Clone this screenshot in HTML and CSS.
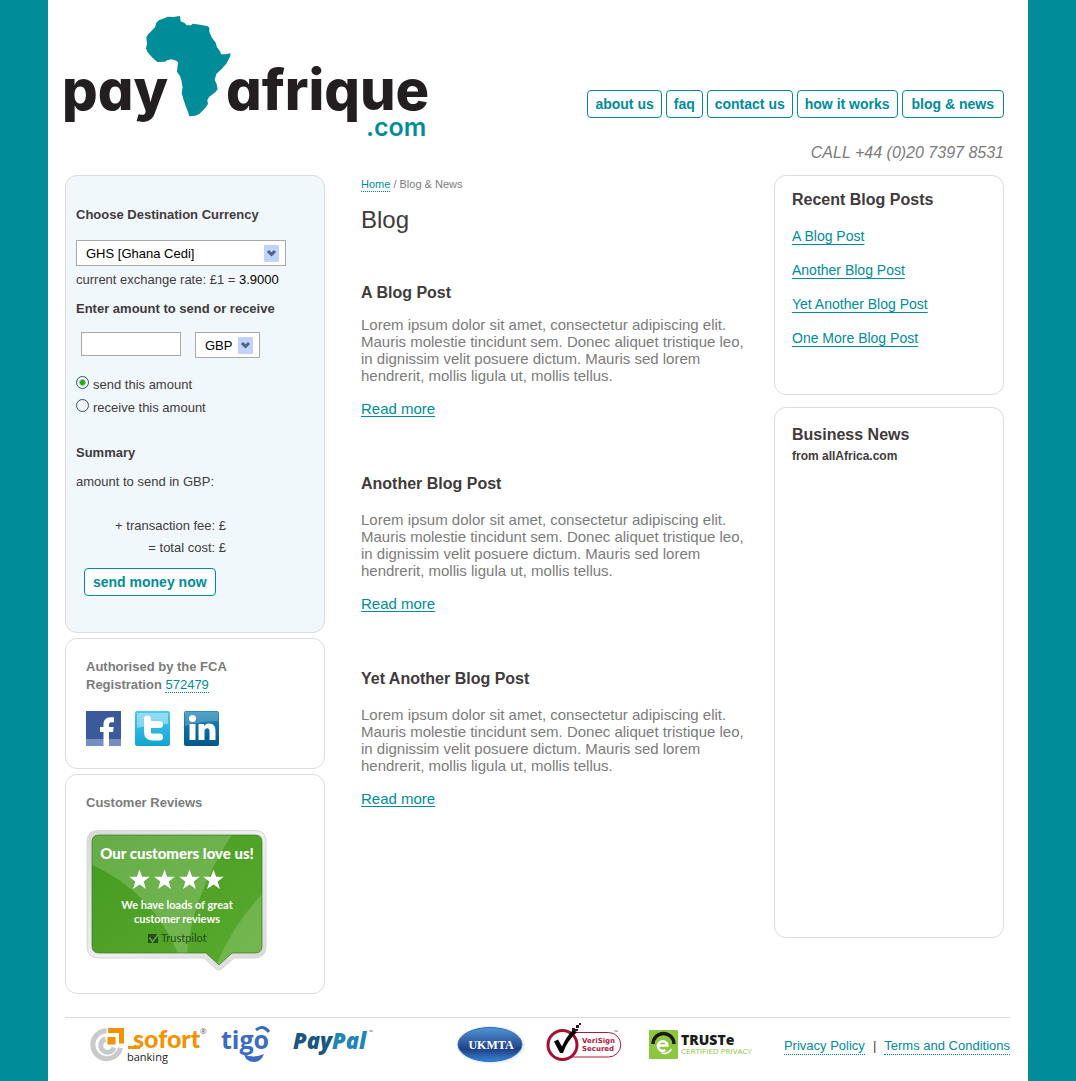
FILE: index.html
```html
<!DOCTYPE html>
<html lang="en">
<head>
<meta charset="utf-8">
<meta name="viewport" content="width=device-width, initial-scale=1">
<title>Blog &amp; News | Pay Afrique</title>
<link rel="stylesheet" href="styles.css">
</head>
<body>
<div class="page">
  <header class="header">
    <a class="logo" href="#" aria-label="payafrique.com">
      <svg width="366" height="126" viewBox="0 0 366 126">
        <g transform="translate(-25 -15) scale(.3333)">
          <path fill="#008c99" d="M383 50L400 51L420 48L422 64L434 69L440 76L453 76L458 71L480 74L504 79L508 84L508 95L515 112L527 128L531 141L541 155L543 163L556 163L572 160L570 170L560 190L545 207L529 222L524 240L530 252L533 268L526 277L508 290L502 300L504 312L495 325L478 342L466 347L448 349L444 335L437 318L431 300L425 280L428 262L424 240L420 228L411 215L413 195L415 188L409 182L395 178L383 180L374 185L352 186L336 172L322 155L318 145L321 132L319 112L325 102L335 92L345 82L349 68L358 60L373 55Z"/>
        </g>
        <text class="logo-name" x="-3" y="95">pay</text>
        <text class="logo-name" x="161" y="95">afrique</text>
        <text class="logo-tld" x="301" y="121">.com</text>
      </svg>
    </a>
    <div class="header-side">
      <nav class="nav">
        <a class="pill" href="#">about us</a>
        <a class="pill" href="#">faq</a>
        <a class="pill" href="#">contact us</a>
        <a class="pill" href="#">how it works</a>
        <a class="pill current" href="#">blog &amp; news</a>
      </nav>
      <p class="call">CALL +44 (0)20 7397 8531</p>
    </div>
  </header>

  <div class="columns">
    <div class="stack">
      <form class="panel calculator">
        <label class="field-title" for="currency">Choose Destination Currency</label>
        <div class="select select-wide">
          <select id="currency"><option>GHS [Ghana Cedi]</option></select>
          <svg class="arrow" width="15" height="17" viewBox="0 0 15 17"><rect width="15" height="17" rx="1" fill="#c1d3fb"/><path d="M4 6l3.500 3.500L11 6" fill="none" stroke="#4d6185" stroke-width="3"/></svg>
        </div>
        <p class="rate">current exchange rate: £1 = <span class="value">3.9000</span></p>
        <label class="field-title" for="amount">Enter amount to send or receive</label>
        <div class="amount-row">
          <input class="amount" id="amount" type="text">
          <div class="select select-small">
            <select aria-label="Amount currency"><option>GBP</option></select>
            <svg class="arrow" width="15" height="17" viewBox="0 0 15 17"><rect width="15" height="17" rx="1" fill="#c1d3fb"/><path d="M4 6l3.500 3.500L11 6" fill="none" stroke="#4d6185" stroke-width="3"/></svg>
          </div>
        </div>
        <div class="choices">
          <label class="choice"><input type="radio" name="direction" checked>send this amount</label>
          <label class="choice"><input type="radio" name="direction">receive this amount</label>
        </div>
        <h2 class="field-title">Summary</h2>
        <p class="sum-first">amount to send in GBP:</p>
        <div class="sums">
          <p>+ transaction fee: £</p>
          <p>= total cost: £</p>
        </div>
        <button class="pill send" type="button">send money now</button>
      </form>

      <section class="panel note">
        <p>Authorised by the FCA<br>Registration <a class="dotted" href="#">572479</a></p>
        <div class="social">
          <a href="#" aria-label="Facebook">
            <svg width="35" height="35" viewBox="0 0 35 35"><rect width="35" height="35" fill="#3b5a9a"/><rect y="28" width="35" height="7" fill="#768dbf"/><path fill="#fff" d="M17.500 35V21H14v-5h3.500v-2.500c0-4.500 2.500-7.300 7-7.300H28v5h-2.500c-1.800 0-2.500.8-2.500 2.500V16h4.700l-.6 5H23v14z"/></svg>
          </a>
          <a href="#" aria-label="Twitter">
            <svg width="35" height="35" viewBox="0 0 35 35"><defs><linearGradient id="tw" x2="0" y2="1"><stop stop-color="#4cc8ee"/><stop offset="1" stop-color="#10a5d0"/></linearGradient></defs><rect width="35" height="35" rx="2" fill="url(#tw)"/><path d="M2 2h31v11Q18 13 2 17z" fill="#fff" opacity=".4"/><path d="M12.500 8v13c0 4 2 5 5.500 5h6.500M13 13.500h11.500" fill="none" stroke="#fff" stroke-width="7" stroke-linecap="round"/></svg>
          </a>
          <a href="#" aria-label="LinkedIn">
            <svg width="35" height="35" viewBox="0 0 35 35"><defs><linearGradient id="li" x2="0" y2="1"><stop stop-color="#2d8dbd"/><stop offset=".5" stop-color="#0b6ea3"/><stop offset="1" stop-color="#00578b"/></linearGradient></defs><rect width="35" height="35" rx="2" fill="url(#li)"/><path d="M1 1h33v9Q18 10 1 15z" fill="#fff" opacity=".2"/><circle cx="8.500" cy="7.500" r="3.500" fill="#fff"/><path fill="#fff" d="M5.500 13h6v16h-6zM14.500 13h5.500v2.200c1-1.700 2.800-2.700 5-2.700 4.500 0 6.500 2.800 6.500 7.500v9h-6v-8.500c0-2-.6-3.300-2.300-3.300-1.800 0-2.700 1.300-2.700 3.300V29h-6z"/></svg>
          </a>
        </div>
      </section>

      <section class="panel note">
        <h2 class="reviews-title">Customer Reviews</h2>
        <a class="badge" href="#" aria-label="Our customer reviews on Trustpilot">
          <svg width="180" height="141" viewBox="0 0 180 141">
            <defs>
              <linearGradient id="rim" x2="1" y2="1"><stop stop-color="#d8d8d8"/><stop offset=".5" stop-color="#efefef"/><stop offset="1" stop-color="#d8d8d8"/></linearGradient>
              <linearGradient id="green" x2="1" y2="1"><stop stop-color="#439a20"/><stop offset="1" stop-color="#5bab2e"/></linearGradient>
              <clipPath id="bubble"><path d="M13 5h156q7 0 7 7v104q0 7-7 7h-23l-13 12-13-12H13q-7 0-7-7V12q0-7 7-7z"/></clipPath>
            </defs>
            <path d="M12 .5h157q11 0 11 11V116q0 12-12 12h-20l-11 10q-4 4-8 0l-11-10H13q-12 0-12-12V12Q1 .5 12 .5z" fill="url(#rim)" stroke="#d8d8d8"/>
            <g clip-path="url(#bubble)">
              <rect width="180" height="141" fill="url(#green)"/>
              <path fill="#fff" opacity=".18" d="M0 0H149Q106 65 101 124H92Q66 60 0 32z"/>
              <path fill="#fff" opacity=".16" d="M180 60Q145 95 128 141H180z"/>
            </g>
            <path d="M13 5h156q7 0 7 7v104q0 7-7 7h-23l-13 12-13-12H13q-7 0-7-7V12q0-7 7-7z" fill="none" stroke="#347b1c" stroke-opacity=".7"/>
            <g fill="#fff" transform="translate(0 1)">
              <path id="star" d="M53.500 38.500l2.600 7.300h7.700l-6.100 4.700 2.200 7.500-6.400-4.400-6.400 4.400 2.200-7.500-6.100-4.700h7.700z"/>
              <use href="#star" x="25"/><use href="#star" x="50"/><use href="#star" x="74"/>
            </g>
            <text class="badge-title" x="91" y="29">Our customers love us!</text>
            <text class="badge-text" x="91" y="79">We have loads of great</text>
            <text class="badge-text" x="91" y="93">customer reviews</text>
            <path fill="#225011" d="M62 104h10v9H62z"/><path d="M63.500 107.500l3 4.500 6-8" fill="none" stroke="#63a84a" stroke-width="1.500"/>
            <text class="badge-brand" x="75" y="112">Trustpilot</text>
          </svg>
        </a>
      </section>
    </div>

    <main class="main">
      <nav class="crumbs"><a class="dotted" href="#">Home</a> / Blog &amp; News</nav>
      <h1>Blog</h1>
      <article class="post">
        <h2>A Blog Post</h2>
        <p>Lorem ipsum dolor sit amet, consectetur adipiscing elit. Mauris molestie tincidunt sem. Donec aliquet tristique leo, in dignissim velit posuere dictum. Mauris sed lorem hendrerit, mollis ligula ut, mollis tellus.</p>
        <a class="more" href="#">Read more</a>
      </article>
      <article class="post">
        <h2>Another Blog Post</h2>
        <p>Lorem ipsum dolor sit amet, consectetur adipiscing elit. Mauris molestie tincidunt sem. Donec aliquet tristique leo, in dignissim velit posuere dictum. Mauris sed lorem hendrerit, mollis ligula ut, mollis tellus.</p>
        <a class="more" href="#">Read more</a>
      </article>
      <article class="post">
        <h2>Yet Another Blog Post</h2>
        <p>Lorem ipsum dolor sit amet, consectetur adipiscing elit. Mauris molestie tincidunt sem. Donec aliquet tristique leo, in dignissim velit posuere dictum. Mauris sed lorem hendrerit, mollis ligula ut, mollis tellus.</p>
        <a class="more" href="#">Read more</a>
      </article>
    </main>

    <aside class="aside">
      <section class="panel recent">
        <h2>Recent Blog Posts</h2>
        <ul>
          <li><a href="#">A Blog Post</a></li>
          <li><a href="#">Another Blog Post</a></li>
          <li><a href="#">Yet Another Blog Post</a></li>
          <li><a href="#">One More Blog Post</a></li>
        </ul>
      </section>
      <section class="panel news">
        <h2>Business News</h2>
        <p>from allAfrica.com</p>
      </section>
    </aside>
  </div>

  <footer class="footer">
    <div class="partners">
      <svg width="114" height="44" viewBox="0 0 114 44" role="img" aria-label="Sofort Banking">
        <path d="M15.500 9.700a14 14 0 1 0 14 17" fill="none" stroke="#c9cacc" stroke-width="5"/>
        <path d="M14.500 18a6.800 6.800 0 1 0 8.500 8.500" fill="none" stroke="#c9cacc" stroke-width="5"/>
        <path d="M17 7h16v15.500h-5V12H17zM16.500 16h8v7.500h-8z" fill="#f39200"/>
        <path d="M37 25h12v3H37z" fill="#f39200"/>
        <text class="sofort" x="42" y="27">sofort</text>
        <text class="sofort-sub" x="36" y="40">banking</text>
        <text class="mark" x="109" y="13">®</text>
      </svg>
      <svg width="50" height="44" viewBox="0 0 50 44" role="img" aria-label="Tigo">
        <text class="tigo" x="0" y="28">tigo</text>
        <path d="M35 9q7-6 13 2" fill="none" stroke="#3b6cbf" stroke-width="3"/>
        <path d="M23 33q9 5 20 0-3 8-10 8-8 0-10-8z" fill="#3b6cbf"/>
      </svg>
      <svg width="96" height="44" viewBox="0 0 96 44" role="img" aria-label="PayPal">
        <text class="paypal" x="6" y="28"><tspan fill="#1a567f">Pay</tspan><tspan fill="#2186b4">Pal</tspan></text>
        <text class="tm" x="82" y="13">™</text>
      </svg>
    </div>
    <div class="partners seals">
      <svg width="68" height="44" viewBox="0 0 68 44" role="img" aria-label="UKMTA">
        <defs><linearGradient id="uk" x2="0" y2="1"><stop stop-color="#4f97d6"/><stop offset=".45" stop-color="#31599f"/><stop offset=".65" stop-color="#204187"/><stop offset="1" stop-color="#3686dc"/></linearGradient></defs>
        <ellipse cx="34" cy="24" rx="34" ry="19" fill="#edf1f8"/>
        <ellipse cx="33" cy="23.500" rx="32" ry="17" fill="url(#uk)" stroke="#2d69b3"/>
        <text class="ukmta" x="34" y="28">UKMTA</text>
      </svg>
      <svg width="88" height="44" viewBox="0 0 88 44" role="img" aria-label="VeriSign Secured">
        <path d="M32 11.500h35.500a12 12 0 0 1 0 24.500H30" fill="none" stroke="#b0173d"/>
        <circle cx="21.500" cy="24" r="14.500" fill="#fff" stroke="#a50f32" stroke-width="3"/>
        <path d="M13 20.500l4-2 4 7Q25 16 32 9l4 2Q26 20 22 32h-3z" fill="#000"/>
        <path d="M31 7h3v3h-3zM35 4h3v3h-3zM34 8h3v2h-3zM38 2h2v2h-2z" fill="#331419"/>
        <text class="verisign" x="41" y="22">VeriSign</text>
        <text class="verisign" x="41" y="30">Secured</text>
        <text class="tm" x="73" y="13">™</text>
      </svg>
      <svg width="110" height="44" viewBox="0 0 110 44" role="img" aria-label="TRUSTe Certified Privacy">
        <rect x="4" y="9" width="29" height="29" rx="1" fill="#8cc63f"/>
        <path d="M8 23a10.500 10.500 0 0 1 21 0" fill="none" stroke="#1a1a1a" stroke-width="3.500"/>
        <path d="M13.500 24.500h9a4.800 4.800 0 1 0-2 4.500" fill="none" stroke="#fff" stroke-width="2.500"/>
        <path d="M26.500 28a9 9 0 0 1-10 4" fill="none" stroke="#fff" stroke-width="1.500"/>
        <text class="truste" x="36" y="24">TRUSTe</text>
        <text class="truste-sub" x="36" y="33">CERTIFIED PRIVACY</text>
      </svg>
    </div>
    <p class="legal"><a class="dotted" href="#">Privacy Policy</a><span>|</span><a class="dotted" href="#">Terms and Conditions</a></p>
  </footer>
</div>
</body>
</html>
```
FILE: styles.css
```css
* { box-sizing: border-box; }

body, h1, h2, p, ul { margin: 0; padding: 0; }

body {
  background: #008c99;
  color: #413a3d;
  font: 13px/20px "Liberation Sans", Arial, sans-serif;
}

a { color: #008c99; }
svg { display: block; overflow: visible; }

.page {
  max-width: 980px;
  min-height: 100vh;
  margin: 0 auto;
  padding: 15px 18px 16px 17px;
  background: #fff;
}

/* Header */
.header {
  display: flex;
  justify-content: space-between;
  padding-right: 6px;
  height: 160px;
}
.logo { text-decoration: none; }
.logo-name { font: 800 56px Inter, sans-serif; font-feature-settings: "cv11"; fill: #231f20; }
.logo-tld { font: 600 25px Inter, sans-serif; fill: #008c99; }
.header-side {
  display: flex;
  flex-direction: column;
  align-items: flex-end;
  padding-top: 75px;
}
.nav { display: flex; gap: 4px; }
.pill {
  height: 28px;
  padding: 0 7px;
  border: 1px solid #008c99;
  border-radius: 4px;
  background: #fff;
  color: #008c99;
  font: bold 14px/26px "Liberation Sans", Arial, sans-serif;
  text-decoration: none;
  white-space: nowrap;
}
.pill.current { padding: 0 9px; }
.call {
  margin-top: 25px;
  color: #7b7b7b;
  font-size: 16px;
  font-style: italic;
}

/* Columns */
.columns {
  display: grid;
  grid-template-columns: 260px minmax(0, 1fr) 230px;
  padding-right: 6px;
}
.stack { display: flex; flex-direction: column; gap: 5px; }
.panel {
  border: 1px solid #dcdcdc;
  border-radius: 12px;
}

/* Calculator */
.calculator {
  padding: 29px 10px 36px;
  background: #f0f8fb;
}
.field-title {
  display: block;
  font-size: 13px;
  font-weight: bold;
  line-height: 20px;
}
.select { position: relative; height: 26px; }
.select-wide { width: 210px; margin-top: 15px; }
.select-small { width: 65px; }
.select select {
  appearance: none;
  width: 100%;
  height: 100%;
  padding: 0 0 0 9px;
  border: 1px solid #a9a9a9;
  border-radius: 0;
  background: #fff;
  color: #000;
  font: 13px "Liberation Sans", Arial, sans-serif;
}
.arrow {
  position: absolute;
  top: 5px;
  right: 7px;
  pointer-events: none;
}
.rate { margin: 4px 0 9px; }
.value { color: #000; }
.amount-row {
  display: flex;
  gap: 14px;
  margin: 13px 0 17px;
  padding-left: 5px;
}
.amount {
  width: 100px;
  height: 24px;
  padding: 0 4px;
  border: 1px solid #a9a9a9;
  background: #fff;
  font: 13px "Liberation Sans", Arial, sans-serif;
}
.choices { display: grid; gap: 3px; margin-bottom: 25px; }
.choice { display: flex; align-items: center; gap: 4px; }
.choice input {
  appearance: none;
  width: 13px;
  height: 13px;
  margin: 0 0 5px;
  border: 1px solid #21517d;
  border-radius: 50%;
  background: #f4f4f1;
}
.choice input:checked {
  background: radial-gradient(circle, #22a81f 0 2px, #fff 4px);
}
.sum-first { margin: 9px 0 24px; }
.sums {
  display: grid;
  gap: 2px;
  width: 150px;
  text-align: right;
}
.send { display: block; margin: 10px 0 0 8px; padding: 0 8px; }

/* Notes */
.note {
  padding: 19px 20px 22px;
  color: #7b7b7b;
  font-weight: bold;
  line-height: 18px;
}
.dotted {
  border-bottom: 1px dotted #008c99;
  font-weight: normal;
  text-decoration: none;
}
.social { display: flex; gap: 14px; margin-top: 17px; }
.reviews-title { font-size: 13px; }
.badge { display: block; margin-top: 18px; }
.badge-title { font: 900 15px Lato, sans-serif; fill: #fff; text-anchor: middle; }
.badge-text { font: 700 11px Lato, sans-serif; fill: #fff; text-anchor: middle; }
.badge-brand { font: 11px Lato, sans-serif; fill: #225011; }

/* Blog */
.main { margin: 0 28px 0 36px; }
.crumbs {
  padding-top: 1px;
  color: #7b7b7b;
  font-size: 11px;
  line-height: 16px;
}
.crumbs .dotted { padding-bottom: 1px; }
h1 {
  margin-top: 14px;
  font-size: 24px;
  font-weight: normal;
  line-height: 28px;
}
.post { margin-top: 57px; }
h1 + .post { margin-top: 49px; }
.post h2, .aside h2 { font-size: 16px; line-height: 20px; }
.post p {
  margin: 17px 0 16px;
  color: #7b7b7b;
  font-size: 15px;
  line-height: 17px;
}
h1 + .post p { margin-top: 13px; }
.more {
  display: block;
  width: fit-content;
  font-size: 15px;
  line-height: 17px;
  text-underline-offset: 2px;
}

/* Right column */
.aside { display: flex; flex-direction: column; gap: 12px; }
.recent { min-height: 220px; padding: 14px 17px; }
.recent ul {
  display: grid;
  gap: 14px;
  margin-top: 16px;
  font-size: 14px;
  list-style: none;
}
.recent a { text-underline-offset: 3px; }
.news { min-height: 531px; padding: 17px; }
.news p {
  margin-top: 3px;
  font-size: 12px;
  font-weight: bold;
  line-height: 16px;
}

/* Footer */
.footer {
  display: flex;
  align-items: flex-start;
  margin-top: 23px;
  padding: 3px 0 0 26px;
  border-top: 1px solid #dcdcdc;
}
.partners { display: flex; gap: 16px; }
.seals { margin-left: 74px; }
.legal {
  display: flex;
  gap: 8px;
  margin: 17px 0 0 auto;
  line-height: 16px;
}
.sofort { font: 900 25px Lato, sans-serif; fill: #f39200; }
.sofort-sub { font: 11px "Open Sans", sans-serif; fill: #222; }
.mark { font: 8px "Open Sans", sans-serif; fill: #555; }
.tm { font: 5px "Open Sans", sans-serif; fill: #555; }
.tigo { font: 700 25px "Open Sans", sans-serif; fill: #3b6cbf; }
.paypal { font: italic 800 22px "Open Sans", sans-serif; }
.ukmta { font: bold 12px "Liberation Serif", serif; fill: #fff; text-anchor: middle; }
.verisign { font: bold 7px "DejaVu Sans", sans-serif; fill: #b0173d; }
.truste { font: 800 14px "Open Sans", sans-serif; fill: #1a1a1a; }
.truste-sub { font: 8px "Open Sans", sans-serif; fill: #8cc63f; }
```
